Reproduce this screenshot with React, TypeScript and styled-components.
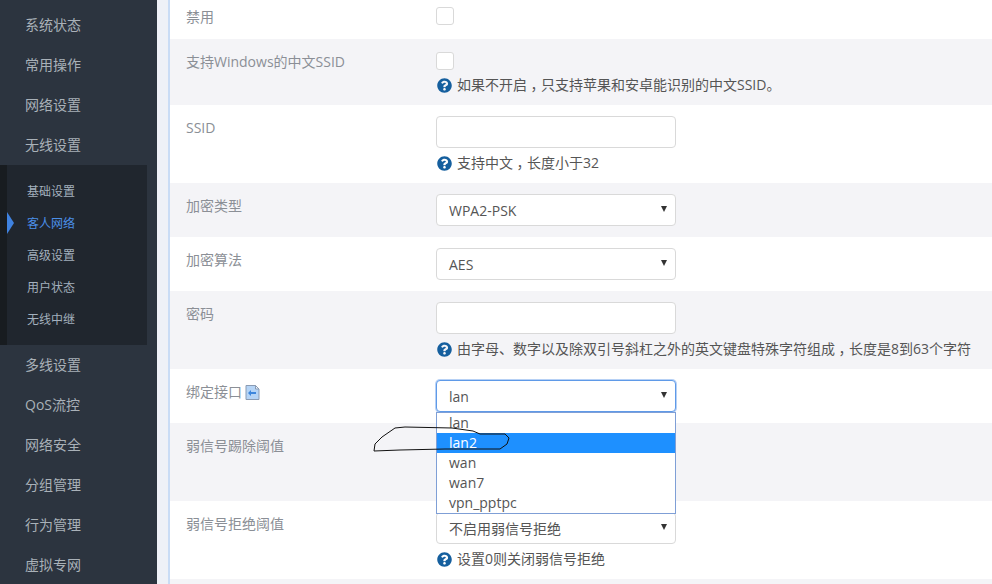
import React from "react";
import styled, { createGlobalStyle } from "styled-components";
import { FaQuestionCircle } from "react-icons/fa";

const Global = createGlobalStyle`
  html, body { margin: 0; padding: 0; background: #eef1f7; overflow: hidden; }
  body { font-family: "Open Sans", "Noto Sans CJK SC", "Liberation Sans", sans-serif; }
  * { box-sizing: border-box; }
`;

const Page = styled.div`
  display: flex;
  width: 992px;
  height: 584px;
  overflow: hidden;
  position: relative;
`;

const Sidebar = styled.nav`
  width: 157px;
  flex: none;
  background: #2c343f;
  padding-top: 5px;
  height: 584px;
  overflow: hidden;
`;

const NavItem = styled.div`
  height: 40px;
  line-height: 40px;
  padding-left: 25px;
  font-size: 14px;
  color: #a9b1b8;
`;

const SubMenu = styled.div`
  width: 147px;
  height: 180px;
  padding: 10px 0;
  background: #20262e;
  border-left: 7px solid #181c20;
`;

const SubItem = styled.div<{ $active?: boolean }>`
  position: relative;
  height: 32px;
  line-height: 33px;
  padding-left: 20px;
  font-size: 12px;
  color: ${(p) => (p.$active ? "#4b8fe8" : "#a3b0bd")};
  ${(p) =>
    p.$active
      ? `&::before {
          content: "";
          position: absolute;
          left: 0;
          top: 5px;
          border-left: 7px solid #3f82e0;
          border-top: 11px solid transparent;
          border-bottom: 11px solid transparent;
        }`
      : ""}
`;

const Main = styled.main`
  flex: 1;
  margin-left: 11px;
  margin-top: -6px;
  background: #fff;
  border-left: 2px solid #c9dcf5;
  min-width: 0;
`;

const Row = styled.div<{ $alt?: boolean; $first?: boolean }>`
  display: grid;
  grid-template-columns: 266px 1fr;
  padding: 11px 0 8px;
  background: ${(p) => (p.$alt ? "#f4f4f7" : "#fff")};
  ${(p) => (p.$first ? "min-height: 45px;" : "")}
`;

const Label = styled.div`
  padding-left: 16px;
  font-size: 14px;
  line-height: 24px;
  height: 24px;
  color: #8b8f96;
  display: flex;
  align-items: center;
  gap: 3px;
  white-space: nowrap;
`;

const Field = styled.div<{ $single?: boolean }>`
  display: flex;
  flex-direction: column;
  min-width: 0;
  ${(p) => (p.$single ? "padding-bottom: 3px;" : "")}
`;

const CheckWrap = styled.div`
  height: 20px;
  display: flex;
  align-items: flex-end;
`;

const Check = styled.span`
  display: block;
  width: 18px;
  height: 18px;
  background: #fff;
  border: 1px solid #d9d9d9;
  border-radius: 3px;
`;

const Input = styled.div`
  width: 240px;
  height: 32px;
  background: #fff;
  border: 1px solid #d9d9d9;
  border-radius: 4px;
`;

const Select = styled.div<{ $focus?: boolean }>`
  width: 240px;
  height: 32px;
  background: #fff;
  border: 1px solid ${(p) => (p.$focus ? "#5f9ae8" : "#d9d9d9")};
  border-radius: 4px;
  padding-left: 12px;
  font-size: 14px;
  color: #555;
  display: flex;
  align-items: center;
  justify-content: space-between;
  ${(p) => (p.$focus ? "box-shadow: 0 0 0 1px rgba(95,154,232,0.45);" : "")}
`;

const SelectText = styled.span`
  line-height: 31px;
  height: 30px;
`;

const Caret = styled.svg`
  width: 6px;
  height: 6px;
  margin-right: 8px;
  margin-top: -3px;
  flex: none;
`;

const Help = styled.div`
  margin-top: 3px;
  height: 24px;
  line-height: 24px;
  display: flex;
  align-items: flex-start;
  gap: 5px;
  font-size: 14px;
  color: #555;
  white-space: nowrap;
`;

const HelpIcon = styled(FaQuestionCircle)`
  width: 15px;
  height: 15px;
  margin-left: 1px;
  margin-top: 5px;
  color: #155f9e;
  flex: none;
`;

const Comma = styled.span`
  font-feature-settings: "halt";
  padding: 0 3.5px;
`;

const Menu = styled.div`
  position: absolute;
  left: 436px;
  top: 412px;
  width: 240px;
  height: 102px;
  background: #fff;
  border: 1px solid #7f9fd6;
  font-size: 14px;
  color: #555;
`;

const Option = styled.div<{ $on?: boolean }>`
  height: 20px;
  line-height: 20px;
  padding-left: 12px;
  background: ${(p) => (p.$on ? "#1e90ff" : "transparent")};
  color: ${(p) => (p.$on ? "#fff" : "#555")};
`;

const Scribble = styled.svg`
  position: absolute;
  left: 370px;
  top: 424px;
  width: 145px;
  height: 30px;
  pointer-events: none;
`;

const CaretIcon = () => (
  <Caret viewBox="0 0 6 6">
    <path d="M0 0h6L3 6z" fill="#333" />
  </Caret>
);

const DocIcon = () => (
  <svg width="15" height="15" viewBox="0 0 15 15">
    <path d="M1 .5h9.500l3.500 3.500v10.500H1z" fill="#b5d4f6" stroke="#8a9bb3" />
    <path d="M10.500 .5v3.500h3.500z" fill="#eef5fd" stroke="#8a9bb3" />
    <path d="M3 8l3-3v2h5v2H6v2z" fill="#3d86dc" />
  </svg>
);

const Q = ({ children }: { children: React.ReactNode }) => (
  <Help>
    <HelpIcon />
    <span>{children}</span>
  </Help>
);

const Sel = ({ value, focus }: { value: string; focus?: boolean }) => (
  <Select $focus={focus}>
    <SelectText>{value}</SelectText>
    <CaretIcon />
  </Select>
);

export default function App() {
  return (
    <>
      <Global />
      <Page>
        <Sidebar>
          <NavItem>系统状态</NavItem>
          <NavItem>常用操作</NavItem>
          <NavItem>网络设置</NavItem>
          <NavItem>无线设置</NavItem>
          <SubMenu>
            <SubItem>基础设置</SubItem>
            <SubItem $active>客人网络</SubItem>
            <SubItem>高级设置</SubItem>
            <SubItem>用户状态</SubItem>
            <SubItem>无线中继</SubItem>
          </SubMenu>
          <NavItem>多线设置</NavItem>
          <NavItem>QoS流控</NavItem>
          <NavItem>网络安全</NavItem>
          <NavItem>分组管理</NavItem>
          <NavItem>行为管理</NavItem>
          <NavItem>虚拟专网</NavItem>
        </Sidebar>
        <Main>
          <Row $first>
            <Label>禁用</Label>
            <Field>
              <CheckWrap>
                <Check />
              </CheckWrap>
            </Field>
          </Row>
          <Row $alt>
            <Label>支持Windows的中文SSID</Label>
            <Field>
              <CheckWrap>
                <Check />
              </CheckWrap>
              <Q>
                如果不开启<Comma>，</Comma>只支持苹果和安卓能识别的中文SSID。
              </Q>
            </Field>
          </Row>
          <Row>
            <Label>SSID</Label>
            <Field>
              <Input />
              <Q>
                支持中文<Comma>，</Comma>长度小于32
              </Q>
            </Field>
          </Row>
          <Row $alt>
            <Label>加密类型</Label>
            <Field $single>
              <Sel value="WPA2-PSK" />
            </Field>
          </Row>
          <Row>
            <Label>加密算法</Label>
            <Field $single>
              <Sel value="AES" />
            </Field>
          </Row>
          <Row $alt>
            <Label>密码</Label>
            <Field>
              <Input />
              <Q>
                由字母、数字以及除双引号斜杠之外的英文键盘特殊字符组成<Comma>，</Comma>长度是8到63个字符
              </Q>
            </Field>
          </Row>
          <Row>
            <Label>
              绑定接口
              <DocIcon />
            </Label>
            <Field $single>
              <Sel value="lan" focus />
            </Field>
          </Row>
          <Row $alt>
            <Label>弱信号踢除阈值</Label>
            <Field>
              <Input />
              <Help />
            </Field>
          </Row>
          <Row>
            <Label>弱信号拒绝阈值</Label>
            <Field>
              <Sel value="不启用弱信号拒绝" />
              <Q>设置0则关闭弱信号拒绝</Q>
            </Field>
          </Row>
          <Row $alt />
        </Main>
        <Menu>
          <Option>lan</Option>
          <Option $on>lan2</Option>
          <Option>wan</Option>
          <Option>wan7</Option>
          <Option>vpn_pptpc</Option>
        </Menu>
        <Scribble viewBox="370 424 145 30">
          <path
            d="M374 451L375 444L382 437L395 428L405 427L452 428L473 431L480 434L505 434L509 438L507 444L500 449L445 449L400 450L374 451"
            fill="none"
            stroke="#111"
            strokeWidth="1"
          />
        </Scribble>
      </Page>
    </>
  );
}
